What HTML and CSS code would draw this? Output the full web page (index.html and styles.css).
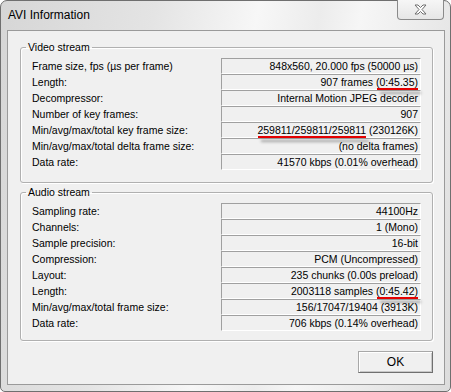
FILE: index.html
```html
<!DOCTYPE html>
<html>
<head>
  <title>AVI Information</title>
  <link rel="stylesheet" href="styles.css">
</head>
<body>
  <div class="window">
    <div class="titlebar">
      <span class="title">AVI Information</span>
      <button class="close">
        <svg width="13" height="11" viewBox="0 0 13 11">
          <polygon points="1,1 4,1 6.5,3.5 9,1 12,1 8,5.5 12,10 9,10 6.5,7.5 4,10 1,10 5,5.5" fill="#fff" stroke="#6e6e6e" stroke-width="1" stroke-linejoin="round"/>
        </svg>
      </button>
    </div>
    <div class="client">
      <fieldset class="group video">
        <legend>Video stream</legend>
        <div class="rows">
          <div class="label">Frame size, fps (µs per frame)</div>
          <div class="value">848x560, 20.000 fps (50000 µs)</div>
          <div class="label">Length:</div>
          <div class="value">907 frames <span class="mark">(0:45.35)</span></div>
          <div class="label">Decompressor:</div>
          <div class="value">Internal Motion JPEG decoder</div>
          <div class="label">Number of key frames:</div>
          <div class="value">907</div>
          <div class="label">Min/avg/max/total key frame size:</div>
          <div class="value"><span class="mark">259811/259811/259811</span> (230126K)</div>
          <div class="label">Min/avg/max/total delta frame size:</div>
          <div class="value">(no delta frames)</div>
          <div class="label">Data rate:</div>
          <div class="value">41570 kbps (0.01% overhead)</div>
        </div>
      </fieldset>
      <fieldset class="group audio">
        <legend>Audio stream</legend>
        <div class="rows">
          <div class="label">Sampling rate:</div>
          <div class="value">44100Hz</div>
          <div class="label">Channels:</div>
          <div class="value">1 (Mono)</div>
          <div class="label">Sample precision:</div>
          <div class="value">16-bit</div>
          <div class="label">Compression:</div>
          <div class="value">PCM (Uncompressed)</div>
          <div class="label">Layout:</div>
          <div class="value">235 chunks (0.00s preload)</div>
          <div class="label">Length:</div>
          <div class="value">2003118 samples <span class="mark">(0:45.42)</span></div>
          <div class="label">Min/avg/max/total frame size:</div>
          <div class="value">156/17047/19404 (3913K)</div>
          <div class="label">Data rate:</div>
          <div class="value">706 kbps (0.14% overhead)</div>
        </div>
      </fieldset>
      <div class="buttons">
        <button class="ok">OK</button>
      </div>
    </div>
  </div>
</body>
</html>
```

FILE: styles.css
```css
body {
  margin: 0;
  padding: 0;
  background-color: #fff;
  font-family: "Liberation Sans", Arial, sans-serif;
}

.window {
  width: 451px;
  height: 392px;
  box-sizing: border-box;
  display: flex;
  flex-direction: column;
  padding: 0 5px 6px 6px;
  border: 1px solid #6f6f6f;
  border-radius: 7px 7px 5px 5px;
  background: linear-gradient(100deg, #d6d6d6 0%, #e4e4e4 30%, #f7f7f7 50%, #ececec 62%, #f6f6f6 70%, #dcdcdc 100%);
}

.titlebar {
  height: 29px;
  display: flex;
  align-items: flex-start;
}

.title {
  margin-top: 7px;
  margin-left: 1px;
  font-size: 12px;
  color: #000;
}

.close {
  margin-left: auto;
  margin-top: -1px;
  margin-right: 1px;
  width: 47px;
  height: 20px;
  padding: 0;
  border: 1px solid #8a8a8a;
  border-top: none;
  border-radius: 0 0 4px 4px;
  background: linear-gradient(#f6f6f6, #e6e6e6);
  display: flex;
  align-items: center;
  justify-content: center;
}

.client {
  flex: 1;
  box-sizing: border-box;
  border: 1px solid #9a9a9a;
  background-color: #f0f0f0;
  padding: 9px 11px 11px 12px;
  font-size: 10.5px;
  color: #000;
}

.group {
  margin: 0;
  border: 1px solid #b0b0b0;
  border-radius: 3px;
  box-shadow: inset 1px 1px 0 #fff, 1px 1px 0 #fff;
  padding: 4px 11px 12px 11px;
}

.group legend {
  margin-left: -6px;
  padding: 0 2px;
  line-height: 14px;
  font-size: 10.5px;
}

.audio {
  margin-top: 2px;
  padding-bottom: 9px;
}

.rows {
  display: grid;
  grid-template-columns: 1fr 200px;
}

.label, .value {
  height: 16px;
  line-height: 14px;
  white-space: nowrap;
}

.label {
  padding-top: 1px;
  box-sizing: border-box;
}

.value {
  box-sizing: border-box;
  text-align: right;
  padding-right: 2px;
  border-top: 1px solid #a0a0a0;
  border-left: 1px solid #a0a0a0;
  border-right: 1px solid #fff;
  border-bottom: 1px solid #fff;
}

.mark {
  position: relative;
}

.mark::after {
  content: '';
  position: absolute;
  left: 1px;
  right: 0;
  bottom: -2px;
  height: 2px;
  background-color: #e40000;
  box-shadow: 3px 4px 3px rgba(0, 0, 0, 0.35);
}

.buttons {
  display: flex;
  justify-content: flex-end;
  margin-top: 10px;
}

.ok {
  width: 75px;
  height: 22px;
  padding: 0;
  font-family: "Liberation Sans", Arial, sans-serif;
  font-size: 12px;
  color: #000;
  background-color: #f0f0f0;
  border: 1px solid #707070;
  border-top-color: #a8a8a8;
  border-left-color: #a8a8a8;
  box-shadow: inset 1px 1px 0 #fff, inset -1px -1px 0 #c8c8c8;
}
```
